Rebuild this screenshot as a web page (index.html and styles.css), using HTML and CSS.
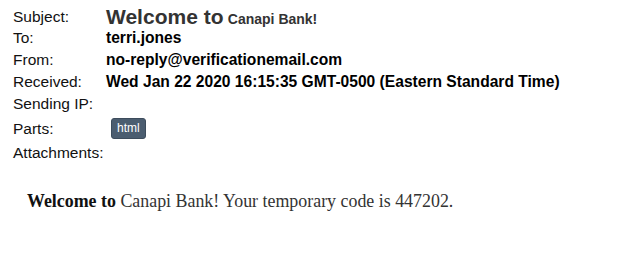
FILE: index.html
```html
<!DOCTYPE html>
<html>
<head>
<meta charset="utf-8">
<link rel="stylesheet" href="styles.css">
</head>
<body>
<div class="headers">
  <div class="row subject-row">
    <div class="label">Subject:</div>
    <div class="value subject"><span class="big">Welcome to</span> <span class="small">Canapi Bank!</span></div>
  </div>
  <div class="row">
    <div class="label">To:</div>
    <div class="value">terri.jones</div>
  </div>
  <div class="row">
    <div class="label">From:</div>
    <div class="value">no-reply@verificationemail.com</div>
  </div>
  <div class="row">
    <div class="label">Received:</div>
    <div class="value">Wed Jan 22 2020 16:15:35 GMT-0500 (Eastern Standard Time)</div>
  </div>
  <div class="row">
    <div class="label">Sending IP:</div>
    <div class="value"></div>
  </div>
  <div class="row parts-row">
    <div class="label">Parts:</div>
    <div class="value"><span class="badge">html</span></div>
  </div>
  <div class="row">
    <div class="label">Attachments:</div>
    <div class="value"></div>
  </div>
</div>
<div class="message">
  <p><b class="strong">Welcome to</b> Canapi Bank! Your temporary code is 447202.</p>
</div>
</body>
</html>
```
FILE: styles.css
```css
html, body {
  margin: 0;
  padding: 0;
  background: #fff;
}
body {
  font-family: "Liberation Sans", Arial, sans-serif;
  color: #111;
}
.headers {
  padding: 5px 0 0 13px;
}
.row {
  display: grid;
  grid-template-columns: 93px 1fr;
  height: 22px;
  align-items: center;
  font-size: 15.5px;
}
.subject-row {
  height: 22px;
}
.parts-row {
  height: 27px;
}
.label {
  white-space: nowrap;
}
.value {
  font-weight: bold;
  font-size: 15.6px;
  white-space: nowrap;
  color: #000;
}
.subject {
  color: #333;
}
.subject .big {
  font-size: 21px;
}
.subject .small {
  font-size: 14px;
}
.badge {
  display: inline-block;
  margin-left: 5px;
  background: #4b5d70;
  border: 1px solid #3d4c5c;
  border-radius: 3px;
  color: #fff;
  font-weight: normal;
  font-size: 12px;
  padding: 2px 5px;
  line-height: 15px;
}
.message {
  padding: 27px 0 0 27px;
}
.message p {
  margin: 0;
  font-family: "Liberation Serif", "Times New Roman", serif;
  font-size: 17.9px;
  color: #333;
}
.strong {
  font-weight: bold;
  color: #111;
}
```
